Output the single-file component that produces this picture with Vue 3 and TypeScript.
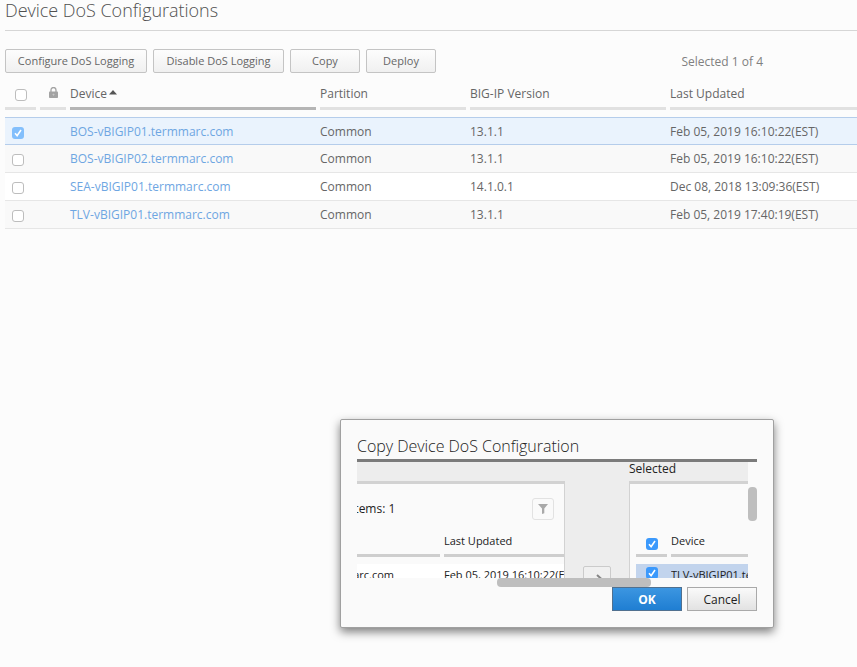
<script setup lang="ts">
import { ref } from 'vue'

interface Device {
  name: string
  partition: string
  version: string
  updated: string
  selected: boolean
}

const actions: string[] = ['Configure DoS Logging', 'Disable DoS Logging', 'Copy', 'Deploy']

const devices = ref<Device[]>([
  { name: 'BOS-vBIGIP01.termmarc.com', partition: 'Common', version: '13.1.1', updated: 'Feb 05, 2019 16:10:22(EST)', selected: true },
  { name: 'BOS-vBIGIP02.termmarc.com', partition: 'Common', version: '13.1.1', updated: 'Feb 05, 2019 16:10:22(EST)', selected: false },
  { name: 'SEA-vBIGIP01.termmarc.com', partition: 'Common', version: '14.1.0.1', updated: 'Dec 08, 2018 13:09:36(EST)', selected: false },
  { name: 'TLV-vBIGIP01.termmarc.com', partition: 'Common', version: '13.1.1', updated: 'Feb 05, 2019 17:40:19(EST)', selected: false },
])
</script>

<template>
  <main class="page">
    <h1 class="title">Device DoS Configurations</h1>

    <div class="toolbar">
      <button v-for="(label, i) in actions" :key="label" class="btn" :class="'btn-' + i">{{ label }}</button>
      <span class="count">Selected 1 of 4</span>
    </div>

    <div class="grid head">
      <div class="th"><span class="check head-check"></span></div>
      <div class="th">
        <svg class="lock" width="9" height="11" viewBox="0 0 9 11">
          <path d="M2 5V3a2.5 2.5 0 0 1 5 0v2" fill="none" stroke="#a3a3a3" stroke-width="1.3" />
          <rect x="0" y="4.6" width="9" height="6.4" rx="0.8" fill="#a3a3a3" />
          <path d="M4.5 6.7v2M3.5 7.5h2" stroke="#c9c9c9" stroke-width="0.8" />
        </svg>
      </div>
      <div class="th sorted">
        Device
        <svg class="caret" width="8" height="5" viewBox="0 0 8 5"><path d="M4 0L8 4.5H0z" fill="#555" /></svg>
      </div>
      <div class="th">Partition</div>
      <div class="th">BIG-IP Version</div>
      <div class="th">Last Updated</div>
    </div>

    <div class="rows">
      <div v-for="d in devices" :key="d.name" class="grid row" :class="{ selected: d.selected }">
        <span class="check" :class="{ on: d.selected }">
          <svg v-if="d.selected" width="12" height="12" viewBox="0 0 12 12"><path d="M3 6.3L5.1 8.6L9 3" /></svg>
        </span>
        <span></span>
        <a class="link">{{ d.name }}</a>
        <span>{{ d.partition }}</span>
        <span>{{ d.version }}</span>
        <span>{{ d.updated }}</span>
      </div>
    </div>

    <section class="dialog">
      <h2 class="dialog-title">Copy Device DoS Configuration</h2>
      <div class="body">
        <div class="viewport">
          <div class="pane available">
            <div class="label"></div>
            <div class="box">
              <div class="filter-row">
                <span class="items">Items: 1</span>
                <span class="filter">
                  <svg width="10" height="10" viewBox="0 0 10 10"><path d="M0 0H10L6.3 4.6V9.2L4 10V4.6z" fill="#a9a9a9" /></svg>
                </span>
              </div>
              <div class="mini mini-head"><div></div><div>Last Updated</div></div>
              <div class="mini mini-row"><div class="clipped"><span>BOS-vBIGIP02.termmarc.com</span></div><div>Feb 05, 2019 16:10:22(EST)</div></div>
            </div>
          </div>
          <div class="middle">
            <span class="move">
              <svg width="14" height="12" viewBox="0 0 14 12"><path d="M1 6H12M7 2L11.5 6L7 10" fill="none" stroke="#858585" stroke-width="2" /></svg>
            </span>
          </div>
          <div class="pane chosen">
            <div class="label">Selected</div>
            <div class="box">
              <div class="filter-row"></div>
              <div class="mini mini-head">
                <div class="cell-check"><span class="check on"><svg width="12" height="12" viewBox="0 0 12 12"><path d="M3 6.3L5.1 8.6L9 3" /></svg></span></div>
                <div>Device</div>
              </div>
              <div class="mini mini-row picked">
                <div class="cell-check"><span class="check on"><svg width="12" height="12" viewBox="0 0 12 12"><path d="M3 6.3L5.1 8.6L9 3" /></svg></span></div>
                <div>TLV-vBIGIP01.termmarc.com</div>
              </div>
            </div>
          </div>
        </div>
        <div class="v-track"><div class="v-thumb"></div></div>
      </div>
      <div class="h-track"><div class="h-thumb"></div></div>
      <div class="footer">
        <button class="dbtn primary">OK</button>
        <button class="dbtn">Cancel</button>
      </div>
    </section>
  </main>
</template>

<style>
html,
body {
  margin: 0;
  background: #fcfcfc;
  overflow: hidden;
}
</style>

<style scoped>
* {
  box-sizing: border-box;
}
.page {
  position: relative;
  width: 857px;
  height: 667px;
  padding-left: 5px;
  overflow: hidden;
  background: #fcfcfc;
  color: #666;
  font-family: 'Open Sans', sans-serif;
  font-size: 12px;
  white-space: nowrap;
}
.title {
  margin: 0;
  height: 31px;
  border-bottom: 1px solid #d6d6d6;
  font-size: 18px;
  font-weight: 300;
  line-height: 21px;
  letter-spacing: -0.03px;
  color: #505050;
}
.toolbar {
  display: flex;
  gap: 6px;
  padding-top: 18px;
  height: 42px;
}
.btn {
  width: 70px;
  height: 24px;
  padding: 0;
  border: 1px solid #c4c4c4;
  border-radius: 2px;
  background: linear-gradient(#fdfdfd, #f0f0f0);
  color: #666;
  font: 11px/22px 'Open Sans', sans-serif;
}
.btn-0 {
  width: 142px;
}
.btn-1 {
  width: 131px;
}
.count {
  margin-left: 239.5px;
  line-height: 25px;
  color: #808080;
}
.grid {
  display: grid;
  grid-template-columns: 31px 26px 246px 146px 196px 187px;
  column-gap: 4px;
}
.head {
  height: 37px;
}
.th {
  height: 37px;
  border-bottom: 3px solid #e1e1e1;
  line-height: 41px;
}
.th.sorted {
  border-color: #b5b5b5;
}
.check {
  display: block;
  width: 12px;
  height: 12px;
  border: 1px solid #bdbdbd;
  border-radius: 3px;
  background: #fff;
}
.head-check {
  margin: 16px 0 0 10px;
}
.check.on {
  border: 0;
  background: #3b99fc;
}
.check svg {
  display: block;
}
.check path {
  fill: none;
  stroke: #fff;
  stroke-width: 1.6;
}
.lock {
  display: block;
  margin: 14px 0 0 9px;
}
.caret {
  display: inline-block;
  margin-left: -1px;
  vertical-align: 3px;
}
.rows {
  margin-top: 7px;
}
.row {
  height: 28px;
  border-bottom: 1px solid #e6e6e6;
  background: #f9f9f9;
  line-height: 27px;
}
.row:nth-child(3) {
  background: #fff;
}
.row .check {
  margin: 9px 0 0 7px;
}
.row.selected {
  border-top: 1px solid #b5cdeb;
  border-bottom-color: #b5cdeb;
  background: #eaf3fd;
}
.row.selected .check {
  background: #83bffc;
}
.link {
  color: #6ea6e2;
}
.dialog {
  position: absolute;
  left: 340px;
  top: 419px;
  width: 434px;
  height: 209px;
  padding: 0 16px;
  border: 1px solid #a0a0a0;
  border-radius: 2px;
  background: #fafafa;
  box-shadow: 0 4px 10px rgba(0, 0, 0, 0.5);
  color: #222;
}
.dialog-title {
  margin: 0;
  height: 42px;
  padding-top: 14px;
  border-bottom: 3px solid #7b7b7b;
  font-size: 16px;
  font-weight: 300;
  line-height: 24px;
  letter-spacing: -0.03px;
}
.body {
  display: flex;
  height: 116px;
}
.viewport {
  display: flex;
  width: 391px;
  overflow: hidden;
  background: #ededed;
}
.pane {
  flex: none;
}
.available {
  width: 208px;
}
.chosen {
  width: 119px;
}
.label {
  height: 19px;
  line-height: 14px;
  font-size: 12px;
}
.box {
  height: 97px;
  overflow: hidden;
  border-top: 3px solid #d2d2d2;
  background: #fafafa;
}
.available .box {
  border-right: 1px solid #d2d2d2;
}
.chosen .box {
  padding-left: 6px;
  border-left: 1px solid #d2d2d2;
}
.filter-row {
  display: flex;
  justify-content: space-between;
  height: 44px;
  padding: 14px 10px 0 0;
}
.items {
  width: 100px;
  height: 20px;
  display: flex;
  align-items: center;
  margin-left: -6px;
}
.filter {
  display: flex;
  align-items: center;
  justify-content: center;
  width: 22px;
  height: 22px;
  border: 1px solid #e2e2e2;
  border-radius: 3px;
}
.mini {
  display: grid;
  column-gap: 4px;
  font-size: 11px;
}
.available .mini {
  grid-template-columns: 83px 120px;
}
.chosen .mini {
  grid-template-columns: 31px 77px;
}
.mini-head > div {
  height: 29px;
  border-bottom: 3px solid #cecece;
  line-height: 26px;
}
.mini-row {
  height: 28px;
  margin-top: 7px;
  background: #fff;
  line-height: 22px;
}
.mini-row > div {
  overflow: hidden;
}
.clipped {
  display: flex;
  justify-content: flex-end;
  padding-right: 46px;
}
.picked {
  background: #c2d4ed;
}
.cell-check {
  padding-left: 10px;
}
.mini-head .cell-check {
  padding-top: 10px;
}
.mini-row .cell-check {
  padding-top: 3px;
}
.middle {
  width: 64px;
  padding: 104px 0 0 18px;
}
.move {
  display: flex;
  justify-content: center;
  width: 28px;
  height: 24px;
  padding-top: 6px;
  border: 1px solid #cbcbcb;
  border-radius: 2px;
  background: #f0f0f0;
}
.v-track {
  width: 9px;
  padding-top: 25px;
}
.v-thumb {
  height: 34px;
  border-radius: 4px;
  background: #bebebe;
}
.h-track {
  height: 9px;
  padding-left: 140px;
}
.h-thumb {
  width: 154px;
  height: 9px;
  border-radius: 4px;
  background: #bebebe;
}
.footer {
  display: flex;
  justify-content: flex-end;
  gap: 5px;
}
.dbtn {
  width: 70px;
  height: 24px;
  padding: 1px 0 0;
  border: 1px solid #a9a9a9;
  background: linear-gradient(#fafafa, #e2e2e2);
  color: #222;
  font: 12px/21px 'Open Sans', sans-serif;
}
.dbtn.primary {
  border-color: #50708f;
  background: linear-gradient(#3c96e1, #1f7ed2);
  color: #fff;
  font-weight: 700;
}
</style>
